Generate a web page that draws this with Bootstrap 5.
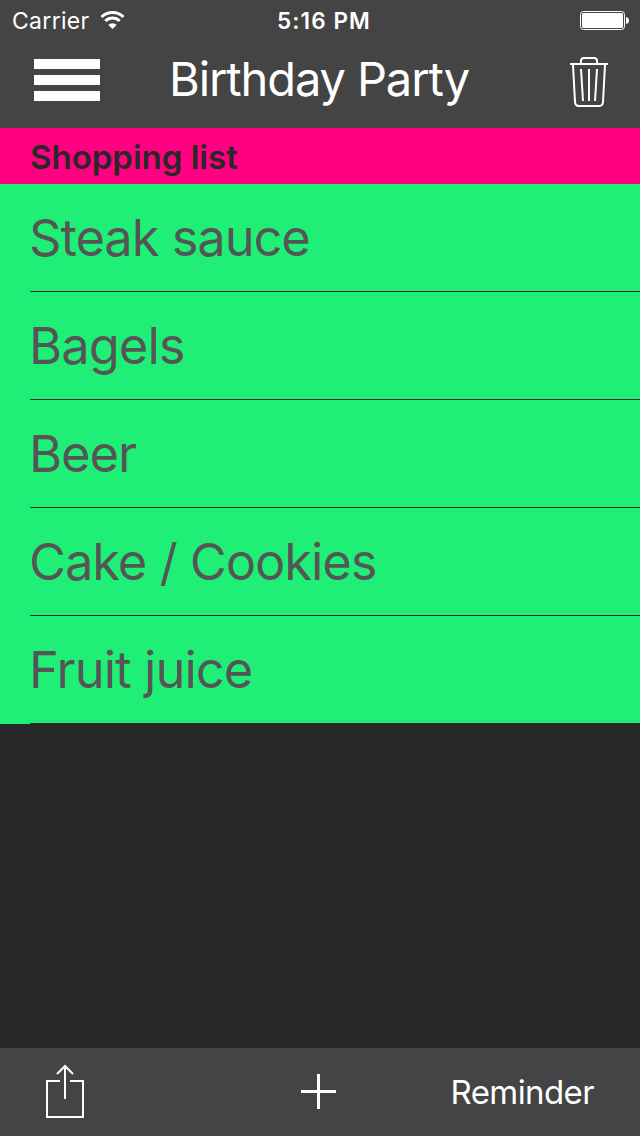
<!DOCTYPE html>
<html lang="en">
<head>
<meta charset="utf-8">
<meta name="viewport" content="width=device-width, initial-scale=1">
<title>Birthday Party</title>
<link href="https://cdn.jsdelivr.net/npm/bootstrap@5.3.0/dist/css/bootstrap.min.css" rel="stylesheet">
<style>
body{font-family:Inter,"Liberation Sans",sans-serif;background:#282828;color:#fff}
svg{display:block;fill:none;stroke:#fff}
.bar-bg{background:#444}
.thirds>*{flex:1 1 0}
.status-row{height:40px;padding:0 11px 0 12px;font-size:23px;line-height:42px}
.status-row .carrier{letter-spacing:.3px;font-weight:400;width:88px}
.status-row .clock{letter-spacing:1.1px;font-weight:600;padding-left:7px;font-size:22.5px}
.title-row{height:88px;padding:0 32px 0 34px}
.title-row h1{flex:0 0 auto;font-size:47px;font-weight:400;line-height:78px;letter-spacing:-1.1px;margin-left:-4px}
.section-head{height:56px;padding-left:30px;background:#ff0080;color:#282828;font-size:33px;font-weight:600;line-height:58px;letter-spacing:0}
.items{background:#1fef76}
.items li{height:108px;margin-left:30px;border-bottom:1px solid #282828;color:#555;font-size:50.5px;line-height:108px;letter-spacing:-1px;text-indent:-1px}
.items .wide{letter-spacing:-.85px}
.tool-row{height:88px;padding:0 49px 0 46px}
.tool-row button{font-size:33px;line-height:88px;color:#fff}
.tool-row .reminder{letter-spacing:-.6px;margin-right:-3px}
</style>
</head>
<body class="vh-100 d-flex flex-column overflow-hidden">
<header class="bar-bg">
  <div class="status-row thirds d-flex">
    <div class="d-flex"><span class="carrier">Carrier</span>
      <svg width="26" height="40" viewBox="0 0 26 40"><path d="M1.500 17a16 16 0 0 1 22 0M5.300 21a10.300 10.300 0 0 1 14.400 0" stroke-width="3"/><path d="M12.500 29L8.300 24.900a6 6 0 0 1 8.400 0z" fill="#fff" stroke="none"/></svg>
    </div>
    <div class="clock text-center text-nowrap">5:16 PM</div>
    <div class="d-flex justify-content-end">
      <svg width="49" height="40" viewBox="580 0 49 40"><rect x="580.5" y="11.5" width="44" height="18" rx="3"/><rect x="582" y="13" width="41" height="15" rx="1.5" fill="#fff" stroke="none"/><path d="M626 17q3 .5 3 3.500t-3 3.500z" fill="#fff" stroke="none"/></svg>
    </div>
  </div>
  <div class="title-row thirds d-flex">
    <div><button class="btn p-0 border-0" aria-label="Menu"><svg width="66" height="61" viewBox="0 0 66 61"><path d="M0 24h66M0 40h66M0 56h66" stroke-width="10"/></svg></button></div>
    <h1 class="my-0 text-nowrap">Birthday Party</h1>
    <div class="d-flex justify-content-end align-items-start"><button class="btn p-0 border-0" aria-label="Delete"><svg width="38" height="70" viewBox="570 40 38 70" stroke-width="2"><path d="M570 64h38M581 63v-2q0-3 3-3h10q3 0 3 3v2M573 65l2 37q.3 4 4 4h20q3.700 0 4-4l2-37M589 69v32M581 69l2 32M597 69l-2 32"/></svg></button></div>
  </div>
</header>
<main class="flex-grow-1">
  <h2 class="section-head m-0">Shopping list</h2>
  <ul class="items list-unstyled m-0">
    <li>Steak sauce</li>
    <li class="wide">Bagels</li>
    <li>Beer</li>
    <li>Cake / Cookies</li>
    <li class="wide">Fruit juice</li>
  </ul>
</main>
<footer class="tool-row thirds bar-bg d-flex">
  <div><button class="btn p-0 border-0" aria-label="Share"><svg width="38" height="88" viewBox="46 1048 38 88" stroke-width="2"><path d="M60 1081H47v36h36v-36H70M65 1099v-32M57 1074l8-8 8 8"/></svg></button></div>
  <div class="d-flex justify-content-center"><button class="btn p-0 border-0" aria-label="Add"><svg width="35" height="88" viewBox="301 1048 35 88" stroke-width="3"><path d="M301 1091.500h35M318.500 1074v35"/></svg></button></div>
  <div class="d-flex justify-content-end"><button class="reminder btn p-0 border-0">Reminder</button></div>
</footer>
<script src="https://cdn.jsdelivr.net/npm/bootstrap@5.3.0/dist/js/bootstrap.bundle.min.js"></script>
</body>
</html>
